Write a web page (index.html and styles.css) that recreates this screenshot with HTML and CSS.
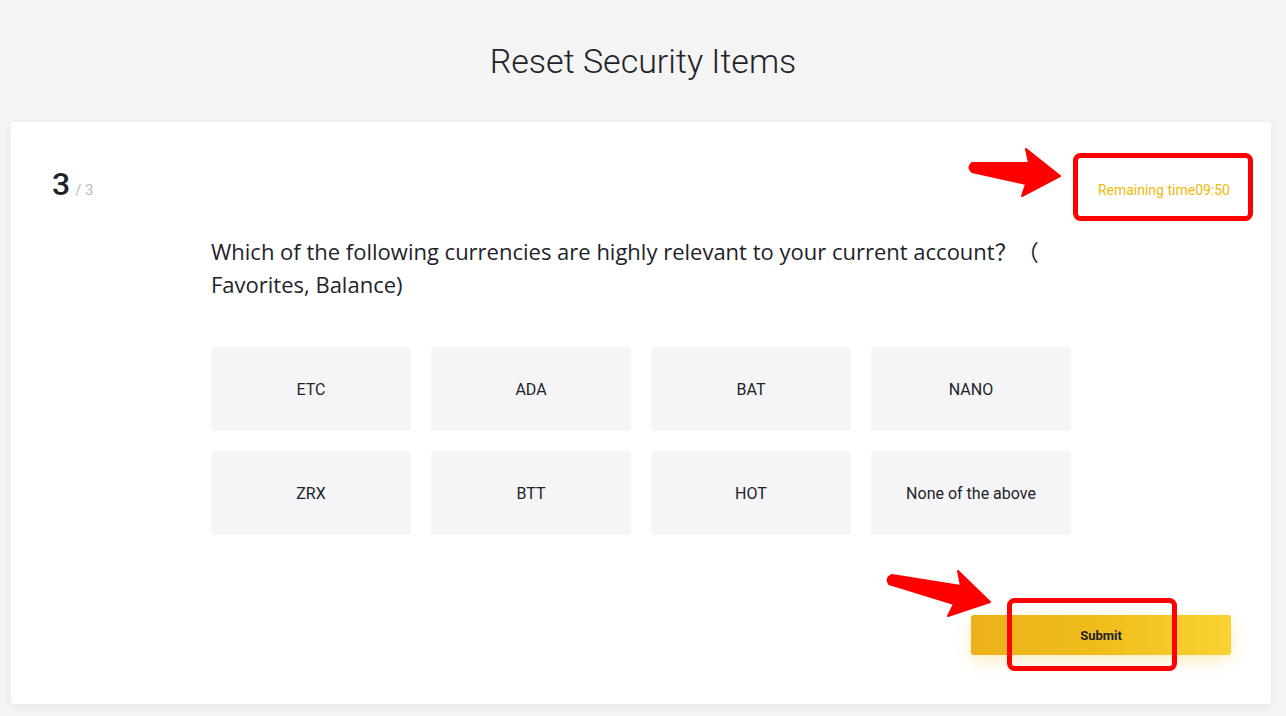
FILE: index.html
```html
<!DOCTYPE html>
<html lang="en">
<head>
<meta charset="utf-8">
<title>Reset Security Items</title>
<link rel="stylesheet" href="styles.css">
</head>
<body>
<div class="page">
  <header class="page-head">
    <h1 class="title">Reset Security Items</h1>
  </header>
  <main class="card">
    <div class="card-top">
      <div class="step"><span class="step-cur">3</span><span class="step-total">/ 3</span></div>
      <div class="timer">Remaining time09:50</div>
    </div>
    <div class="quiz">
      <p class="question">Which of the following currencies are highly relevant to your current account？（<br>Favorites, Balance)</p>
      <div class="options">
        <div class="option">ETC</div>
        <div class="option">ADA</div>
        <div class="option">BAT</div>
        <div class="option">NANO</div>
        <div class="option">ZRX</div>
        <div class="option">BTT</div>
        <div class="option">HOT</div>
        <div class="option">None of the above</div>
      </div>
    </div>
    <div class="actions">
      <button class="submit" type="button">Submit</button>
    </div>
  </main>
  <svg class="annotations" width="1286" height="716" viewBox="0 0 1286 716" xmlns="http://www.w3.org/2000/svg">
    <g fill="#ff0000" stroke="#ff0000" stroke-linejoin="round" stroke-width="2">
      <path d="M972 163 L1029 163 L1026 149 L1060 176 L1022 196 L1026 184 L972 172 Q967 168 972 163 Z"/>
      <path d="M892 575 L961 586 L958 571 L990 602 L948 616 L954 604 L889 584 Q885 578 892 575 Z"/>
    </g>
    <g fill="none" stroke="#ff0000" stroke-width="5">
      <rect x="1075.5" y="155.5" width="175" height="63" rx="5"/>
      <rect x="1009.5" y="600.5" width="165" height="68" rx="5"/>
    </g>
  </svg>
</div>
</body>
</html>
```
FILE: styles.css
```css
* { box-sizing: border-box; }
html, body {
  margin: 0;
  padding: 0;
}
body {
  background: #f4f4f4;
  font-family: "Roboto", "Noto Sans", "Noto Sans CJK SC", sans-serif;
  color: #1e2329;
  width: 1286px;
  height: 716px;
  overflow: hidden;
}
.page {
  position: relative;
  width: 1286px;
  height: 716px;
}
.page-head {
  height: 122px;
  display: flex;
  align-items: center;
  justify-content: center;
}
.title {
  margin: 0;
  font-size: 34px;
  font-weight: 300;
  color: #1e2329;
  line-height: 1;
}
.card {
  margin: 0 15px 0 11px;
  background: #ffffff;
  border-radius: 4px;
  box-shadow: 0 2px 8px rgba(0,0,0,0.06);
  padding: 42px 40px 49px 40px;
  display: flex;
  flex-direction: column;
}
.card-top {
  display: flex;
  justify-content: space-between;
  align-items: baseline;
}
.step {
  margin-left: 1px;
}
.step-cur {
  font-size: 32px;
  font-weight: 500;
  line-height: 40px;
  color: #1e2329;
}
.step-total {
  font-size: 15px;
  color: #b7bdc6;
  margin-left: 5px;
}
.timer {
  font-size: 14px;
  color: #f0b90b;
  margin-right: 1px;
}
.quiz {
  width: 860px;
  align-self: center;
  margin-top: 31px;
}
.question {
  margin: 0;
  font-family: "Open Sans", "Noto Sans", "Noto Sans CJK SC", sans-serif;
  font-size: 22px;
  line-height: 33px;
  color: #1e2329;
}
.options {
  margin-top: 46px;
  display: grid;
  grid-template-columns: repeat(4, 200px);
  grid-auto-rows: 84px;
  gap: 20px;
}
.option {
  background: #f5f5f7;
  border-radius: 4px;
  display: flex;
  align-items: center;
  justify-content: center;
  font-size: 16px;
  color: #1e2329;
}
.actions {
  display: flex;
  justify-content: flex-end;
  margin-top: 80px;
}
.submit {
  width: 260px;
  height: 40px;
  border: none;
  border-radius: 3px;
  background: linear-gradient(90deg, #ecb11a 0%, #f0bd1c 50%, #f8d333 100%);
  box-shadow: 0 6px 16px rgba(240, 185, 11, 0.25);
  font-family: inherit;
  font-size: 13px;
  font-weight: 700;
  color: #1e2329;
  cursor: pointer;
}
.annotations {
  position: absolute;
  left: 0;
  top: 0;
  pointer-events: none;
}
```
